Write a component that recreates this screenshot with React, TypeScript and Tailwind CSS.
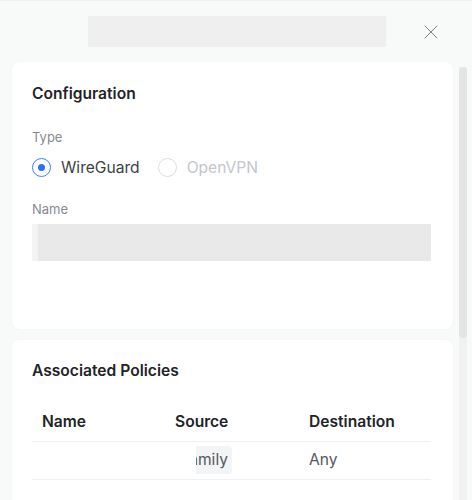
import { X } from 'lucide-react';

type Policy = {
  name: string;
  source: string;
  destination: string;
};

const policies: Policy[] = [{ name: '', source: 'Family', destination: 'Any' }];

function Radio({ label, checked }: { label: string; checked?: boolean }) {
  return (
    <label className="flex items-center gap-[10px]">
      <span
        className={`flex h-[19px] w-[19px] items-center justify-center rounded-full border ${
          checked ? 'border-[#3b82f6]' : 'border-[#dcdfe3]'
        }`}
      >
        {checked && <span className="h-[7px] w-[7px] rounded-full bg-[#2f6ff0]" />}
      </span>
      <span className={`text-[15.6px] ${checked ? 'text-[#3d3f44]' : 'text-[#c3c6cc]'}`}>{label}</span>
    </label>
  );
}

export default function App() {
  return (
    <div
      className="h-[500px] w-[472px] overflow-hidden border-t border-[#eef0f3] bg-[#f8f9f9]"
      style={{ fontFamily: 'Inter, "Liberation Sans", sans-serif' }}
    >
      {/* Header */}
      <div className="flex h-[61px] items-start pt-[15px]">
        <div className="ml-[88px] h-[31px] w-[298px] bg-[#efefef]" />
        <button className="ml-[33px] mt-[4px] text-[#7d8087]">
          <X size={24} strokeWidth={1} />
        </button>
      </div>

      <div className="flex">
        <div className="ml-[12px] flex w-[441px] flex-col gap-[11px]">
          {/* Configuration */}
          <section className="h-[267px] rounded-[8px] bg-white px-[20px] pt-[20px] shadow-[0_0_2px_rgba(0,0,0,0.04)]">
            <h2 className="text-[15.6px] leading-[24px] font-semibold text-[#222326]">Configuration</h2>
            <div className="mt-[21px] text-[13px] leading-[20px] text-[#868a91]">Type</div>
            <div className="mt-[9px] flex h-[24px] items-center gap-[18px]">
              <Radio label="WireGuard" checked />
              <Radio label="OpenVPN" />
            </div>
            <div className="mt-[19px] text-[13px] leading-[20px] text-[#868a91]">Name</div>
            <div className="mt-[5px] flex h-[37px] w-[399px] bg-[#f4f4f4]">
              <div className="ml-[6px] h-full flex-1 bg-[#e9e9e9]" />
            </div>
          </section>

          {/* Associated Policies */}
          <section className="h-[200px] rounded-[8px] bg-white px-[20px] pt-[19px] shadow-[0_0_2px_rgba(0,0,0,0.04)]">
            <h2 className="text-[15.6px] leading-[24px] font-semibold text-[#222326]">Associated Policies</h2>
            <table className="mt-[19px] w-[399px] table-fixed text-left">
              <thead>
                <tr className="h-[39px] border-b border-[#eef0f2] text-[15.6px] font-semibold text-[#222326]">
                  <th className="w-[133px] pl-[10px] font-semibold">Name</th>
                  <th className="w-[134px] pl-[10px] font-semibold">Source</th>
                  <th className="pl-[10px] font-semibold">Destination</th>
                </tr>
              </thead>
              <tbody>
                {policies.map((p, i) => (
                  <tr key={i} className="h-[38px] border-b border-[#eef0f2] text-[15.6px] text-[#55585e]">
                    <td className="pl-[10px]">{p.name}</td>
                    <td className="pl-[10px]">
                      <span className="ml-[21px] flex h-[28px] w-[36px] items-center justify-end overflow-hidden rounded-r-[4px] bg-[#f3f4f6] pr-[4px]">
                        <span className="whitespace-nowrap">{p.source}</span>
                      </span>
                    </td>
                    <td className="pl-[10px]">{p.destination}</td>
                  </tr>
                ))}
              </tbody>
            </table>
          </section>
        </div>

        {/* Scrollbar */}
        <div className="ml-[6px] mt-[5px] flex w-[8px] flex-col">
          <div className="h-[271px] rounded-[3px] bg-[#e4e4e4]" />
          <div className="h-[200px] bg-[#f1f1f1]" />
        </div>
      </div>
    </div>
  );
}
